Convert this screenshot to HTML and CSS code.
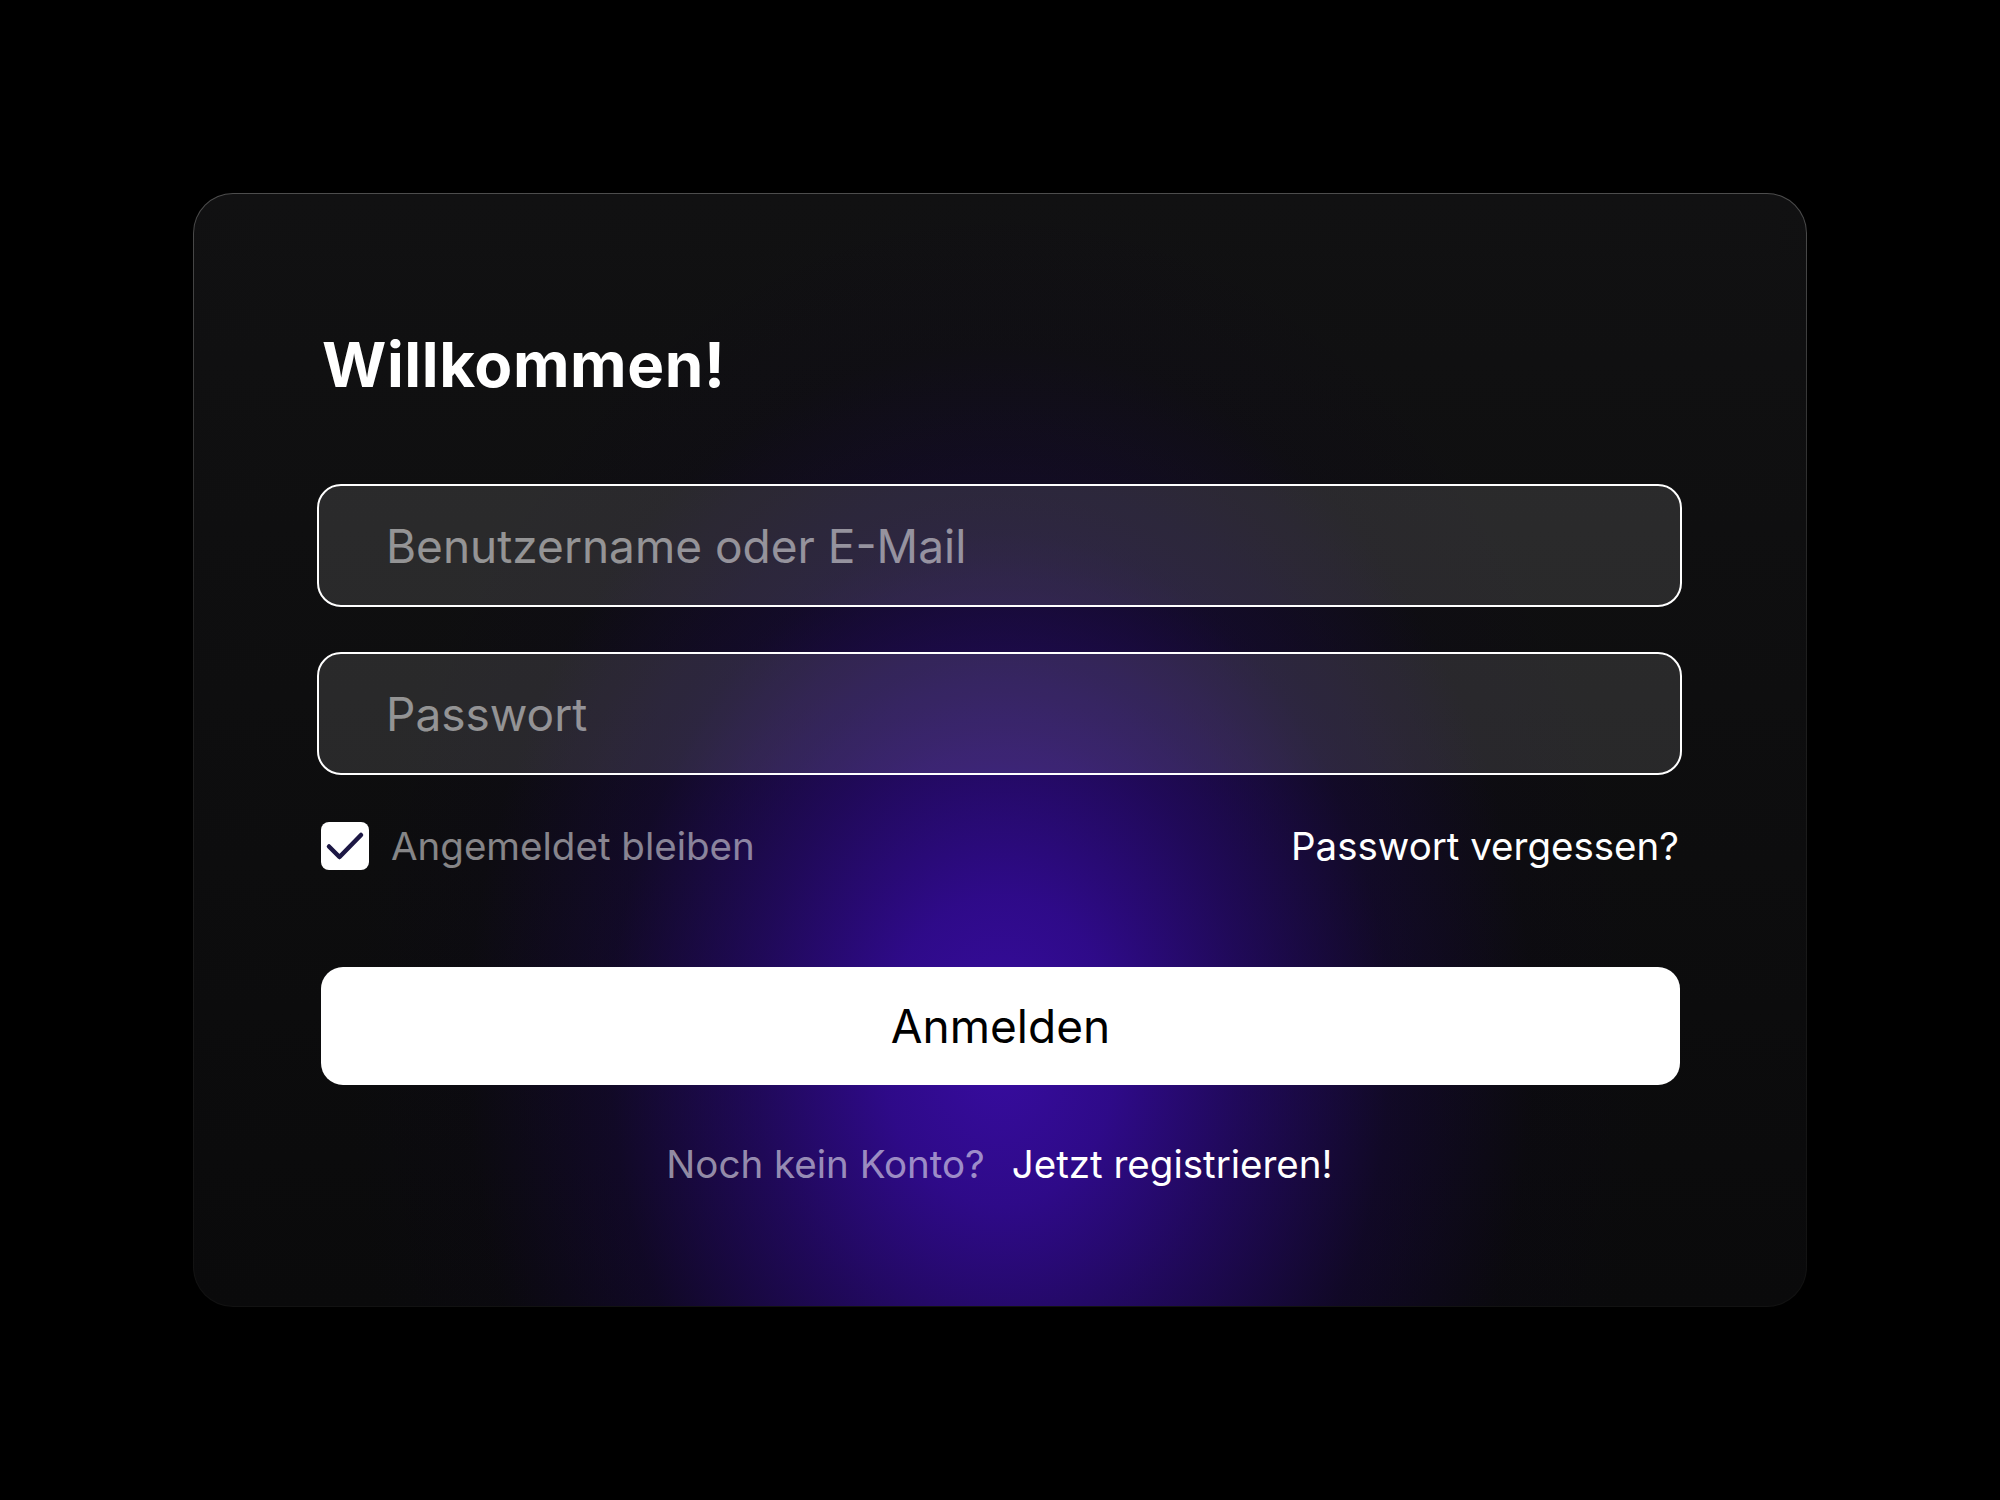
FILE: index.html
```html
<!DOCTYPE html>
<html lang="de">
<head>
<meta charset="utf-8">
<title>Anmelden</title>
<link rel="stylesheet" href="styles.css">
</head>
<body>
<main class="stage">
  <form class="card" onsubmit="return false">
    <h1 class="title">Willkommen!</h1>
    <div class="fields">
      <input class="field" type="text" placeholder="Benutzername oder E-Mail">
      <input class="field" type="password" placeholder="Passwort">
    </div>
    <div class="options">
      <label class="remember">
        <span class="check">
          <svg viewBox="0 0 48 48" width="48" height="48"><path d="M8 24.5 L18.5 35 L40 13" fill="none" stroke="#1c1744" stroke-width="4.5" stroke-linecap="round" stroke-linejoin="round"/></svg>
        </span>
        <span class="remember-text">Angemeldet bleiben</span>
      </label>
      <a class="forgot" href="#">Passwort vergessen?</a>
    </div>
    <button class="submit" type="submit">Anmelden</button>
    <p class="signup"><span class="signup-muted">Noch kein Konto?</span><a class="signup-link" href="#">Jetzt registrieren!</a></p>
  </form>
</main>
</body>
</html>
```

FILE: styles.css
```css
html, body {
  margin: 0;
  padding: 0;
  background: #000;
}

body {
  font-family: Inter, "Liberation Sans", sans-serif;
  color: #fff;
}

.stage {
  min-height: 100vh;
  display: flex;
  align-items: center;
  justify-content: center;
}

.card {
  box-sizing: border-box;
  width: 1614px;
  height: 1114px;
  padding: 140px 124px 0 123px;
  border-radius: 40px;
  border: 1.5px solid transparent;
  background:
    radial-gradient(ellipse 650px 860px at 50% 77%,
      rgba(58, 12, 168, 0.95) 0%,
      rgba(50, 10, 150, 0.9) 18%,
      rgba(40, 8, 120, 0.7) 38%,
      rgba(26, 6, 78, 0.4) 60%,
      rgba(14, 6, 36, 0.14) 82%,
      rgba(0, 0, 0, 0) 100%) padding-box,
    linear-gradient(180deg, #111112 0%, #0d0d0e 60%, #0a0a0b 100%) padding-box,
    linear-gradient(180deg, rgba(255,255,255,0.30) 0%, rgba(255,255,255,0.12) 40%, rgba(255,255,255,0.07) 100%) border-box;
  display: flex;
  flex-direction: column;
}

.title {
  margin: 0 0 88px 5px;
  font-size: 62px;
  line-height: 1;
  font-weight: 700;
  letter-spacing: 0.6px;
}

.fields {
  display: flex;
  flex-direction: column;
  gap: 45px;
}

.field {
  box-sizing: border-box;
  height: 123px;
  width: 100%;
  padding: 0 0 0 67px;
  border: 2.5px solid #fff;
  border-radius: 24px;
  background: rgba(255, 255, 255, 0.115);
  color: #fff;
  font-family: Inter, "Liberation Sans", sans-serif;
  font-size: 46px;
  outline: none;
}

.field::placeholder {
  color: rgba(255, 255, 255, 0.5);
}

.options {
  margin-top: 47px;
  display: flex;
  align-items: center;
  justify-content: space-between;
  padding: 0 3px 0 4px;
}

.remember {
  display: flex;
  align-items: center;
  gap: 22px;
}

.check {
  width: 48px;
  height: 48px;
  border-radius: 8px;
  background: #fff;
  display: flex;
}

.remember-text {
  font-size: 38.5px;
  color: rgba(255, 255, 255, 0.5);
}

.forgot {
  font-size: 38.5px;
  color: #fff;
  text-decoration: none;
}

.submit {
  margin: 97px 2px 0 4px;
  height: 118px;
  border: none;
  border-radius: 22px;
  background: #fff;
  color: #000;
  font-family: Inter, "Liberation Sans", sans-serif;
  font-size: 46px;
  font-weight: 400;
}

.signup {
  margin: 60px 0 0;
  display: flex;
  justify-content: center;
  gap: 27px;
  font-size: 38.5px;
  line-height: 1;
}

.signup-muted {
  color: rgba(255, 255, 255, 0.55);
}

.signup-link {
  color: #fff;
  text-decoration: none;
}
```
